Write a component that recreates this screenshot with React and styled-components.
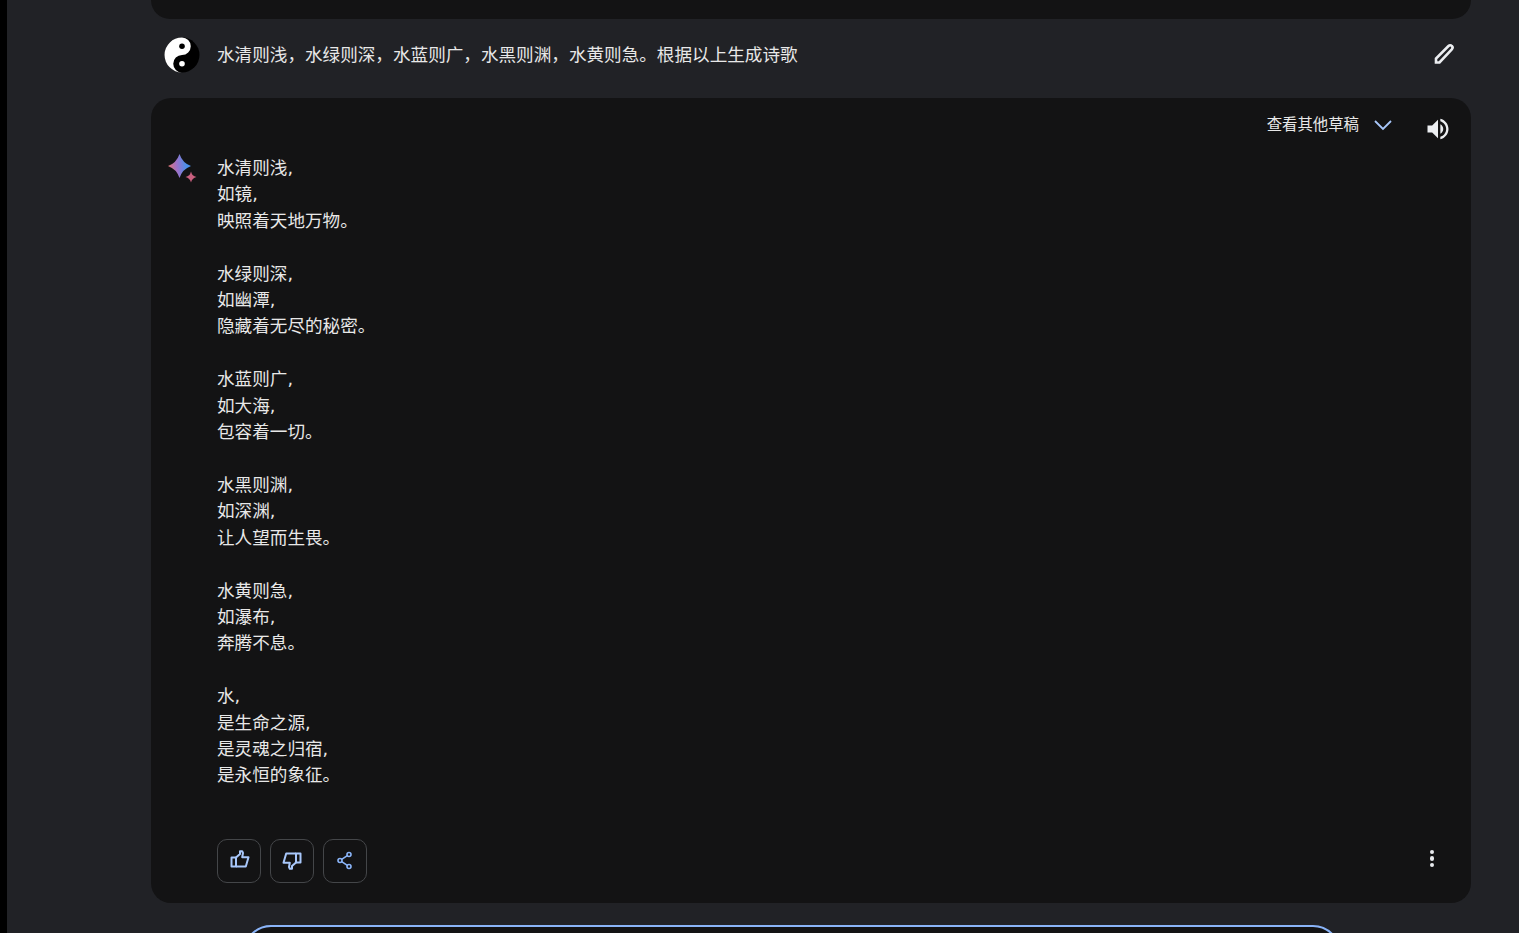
import React from 'react';
import styled, { createGlobalStyle } from 'styled-components';

const GlobalStyle = createGlobalStyle`
  html, body {
    margin: 0;
    height: 100%;
    overflow: hidden;
    background: #000;
  }
  body {
    font-family: "DejaVu Sans", "Noto Sans CJK SC", sans-serif;
    color: #e8e8e8;
  }
`;

const Shell = styled.div`
  height: 933px;
  margin-left: 7px;
  background: #212226;
  overflow: hidden;
  padding: 0 48px 0 144px;
`;

const Card = styled.div`
  background: #131314;
  border-radius: 0 0 20px 20px;
  height: 19px;
`;

const PromptRow = styled.div`
  height: 79px;
  display: flex;
  align-items: center;
  padding: 0 15px 8px 13px;
  box-sizing: border-box;
`;

const Avatar = styled.svg`
  width: 36px;
  height: 36px;
  flex: none;
  margin-right: 17px;
`;

const PromptText = styled.div`
  flex: 1;
  font-size: 17.6px;
  line-height: 26px;
`;

const EditIcon = styled.svg`
  width: 24px;
  height: 24px;
  margin-top: -2px;
`;

const AnswerCard = styled.div`
  background: #131314;
  border-radius: 20px;
  height: 805px;
  display: flex;
  flex-direction: column;
  padding: 15px 20px 20px 16px;
  box-sizing: border-box;
`;

const DraftBar = styled.div`
  display: flex;
  justify-content: flex-end;
  align-items: center;
  height: 30px;
`;

const DraftLabel = styled.span`
  font-size: 15.4px;
  margin-top: -10px;
`;

const Chevron = styled.svg`
  width: 24px;
  height: 24px;
  margin: -6px 29px 0 12px;
`;

const Speaker = styled.svg`
  width: 28px;
  height: 28px;
  margin: 1px -1px 0 0;
`;

const AnswerBody = styled.div`
  flex: 1;
  display: flex;
  padding-top: 12px;
`;

const Sparkle = styled.svg`
  width: 32px;
  height: 32px;
  flex: none;
  margin-right: 18px;
  margin-top: -1px;
`;

const Poem = styled.div`
  font-size: 17.6px;
  line-height: 26.4px;
  white-space: pre-line;
`;

const ActionRow = styled.div`
  display: flex;
  align-items: center;
  gap: 9px;
  padding-left: 50px;
`;

const ActionButton = styled.button`
  width: 44px;
  height: 44px;
  padding: 0;
  display: flex;
  align-items: center;
  justify-content: center;
  background: transparent;
  border: 1px solid #444649;
  border-radius: 10px;
  color: #a8c7fa;
`;

const ThumbSvg = styled.svg`
  width: 20px;
  height: 20px;
  transform: ${(p) => (p.$down ? 'rotate(180deg)' : 'translate(1px, -2px)')};
`;

const ShareSvg = styled.svg`
  width: 20px;
  height: 20px;
  color: #8ab4f8;
`;

const MoreButton = styled.div`
  margin-left: auto;
  margin-right: 17px;
  margin-top: -5px;
  display: flex;
  flex-direction: column;
  gap: 2px;
`;

const Dot = styled.span`
  width: 4.5px;
  height: 4.5px;
  border-radius: 50%;
  background: #e8eaed;
`;

const InputBox = styled.div`
  width: 1098px;
  height: 60px;
  margin: 22px 0 0 92px;
  box-sizing: border-box;
  background: #131314;
  border: 2px solid #8ab4f8;
  border-radius: 28px;
`;

const poem = `水清则浅,
如镜,
映照着天地万物。

水绿则深,
如幽潭,
隐藏着无尽的秘密。

水蓝则广,
如大海,
包容着一切。

水黑则渊,
如深渊,
让人望而生畏。

水黄则急,
如瀑布,
奔腾不息。

水,
是生命之源,
是灵魂之归宿,
是永恒的象征。`;

const ThumbIcon = ({ down }) => (
  <ThumbSvg
    $down={down}
    viewBox="0 0 20 20"
    fill="none"
    stroke="currentColor"
    strokeWidth="2"
    strokeLinejoin="round"
  >
    <path d="M1.500 8.500h4.500v9H1.500z" />
    <path d="M6 8.500 10 5V2.300h2.200L13 4l-.8 4.200H18.500l-2.700 9.300H6" />
  </ThumbSvg>
);

const ShareIcon = () => (
  <ShareSvg viewBox="0 0 20 20" fill="none" stroke="currentColor" strokeWidth="1.600">
    <circle cx="14" cy="3.500" r="2" />
    <circle cx="5" cy="9.500" r="2" />
    <circle cx="14" cy="15.500" r="2" />
    <path d="M12.300 4.600 6.700 8.400M6.700 10.600l5.600 3.800" />
  </ShareSvg>
);

export default function App() {
  return (
    <>
      <GlobalStyle />
      <Shell>
        <Card />
        <PromptRow>
          <Avatar viewBox="0 0 36 36">
            <circle cx="18" cy="18" r="17.5" fill="#000" />
            <path d="M18 .5a17.500 17.500 0 0 0 0 35 8.750 8.750 0 0 1 0-17.500 8.750 8.750 0 0 0 0-17.500z" fill="#fff" />
            <circle cx="18" cy="9.250" r="2.800" fill="#000" />
            <circle cx="18" cy="26.750" r="2.800" fill="#fff" />
          </Avatar>
          <PromptText>水清则浅，水绿则深，水蓝则广，水黑则渊，水黄则急。根据以上生成诗歌</PromptText>
          <EditIcon viewBox="0 0 24 24" fill="none" stroke="#eceef1" strokeWidth="2.6">
            <path d="M4 20.500v-4L16.500 4c1-1 2.400-1 3.300 0 1 1 1 2.300 0 3.300L7.500 20.500z" />
          </EditIcon>
        </PromptRow>
        <AnswerCard>
          <DraftBar>
            <DraftLabel>查看其他草稿</DraftLabel>
            <Chevron viewBox="0 0 24 24" fill="none" stroke="#a8c7fa" strokeWidth="1.8">
              <path d="M4 8l8 8 8-8" />
            </Chevron>
            <Speaker viewBox="0 0 24 24" fill="#eceef1">
              <path d="M3 9v6h4l5 5V4L7 9H3zm13.500 3c0-1.770-1.020-3.290-2.500-4.030v8.050c1.480-.73 2.500-2.250 2.500-4.020zM14 3.230v2.060c2.890.86 5 3.540 5 6.710s-2.110 5.850-5 6.710v2.060c4.010-.91 7-4.490 7-8.770s-2.990-7.860-7-8.770z" />
            </Speaker>
          </DraftBar>
          <AnswerBody>
            <Sparkle viewBox="0 0 32 32">
              <defs>
                <linearGradient id="spark" x1="0" y1="0.55" x2="1" y2="0.45">
                  <stop offset="0" stopColor="#e0736f" />
                  <stop offset="0.4" stopColor="#9b72cb" />
                  <stop offset="0.8" stopColor="#4a90e8" />
                </linearGradient>
              </defs>
              <path d="M12.500 0Q15.500 9 24 12 15.500 15 12.500 24 9.500 15 1 12 9.500 9 12.500 0z" fill="url(#spark)" />
              <path d="M24 17.500Q25 22 29.500 23 25 24 24 28.500 23 24 18.500 23 23 22 24 17.500z" fill="#c9607f" />
            </Sparkle>
            <Poem>{poem}</Poem>
          </AnswerBody>
          <ActionRow>
            <ActionButton><ThumbIcon /></ActionButton>
            <ActionButton><ThumbIcon down /></ActionButton>
            <ActionButton><ShareIcon /></ActionButton>
            <MoreButton><Dot /><Dot /><Dot /></MoreButton>
          </ActionRow>
        </AnswerCard>
        <InputBox />
      </Shell>
    </>
  );
}
